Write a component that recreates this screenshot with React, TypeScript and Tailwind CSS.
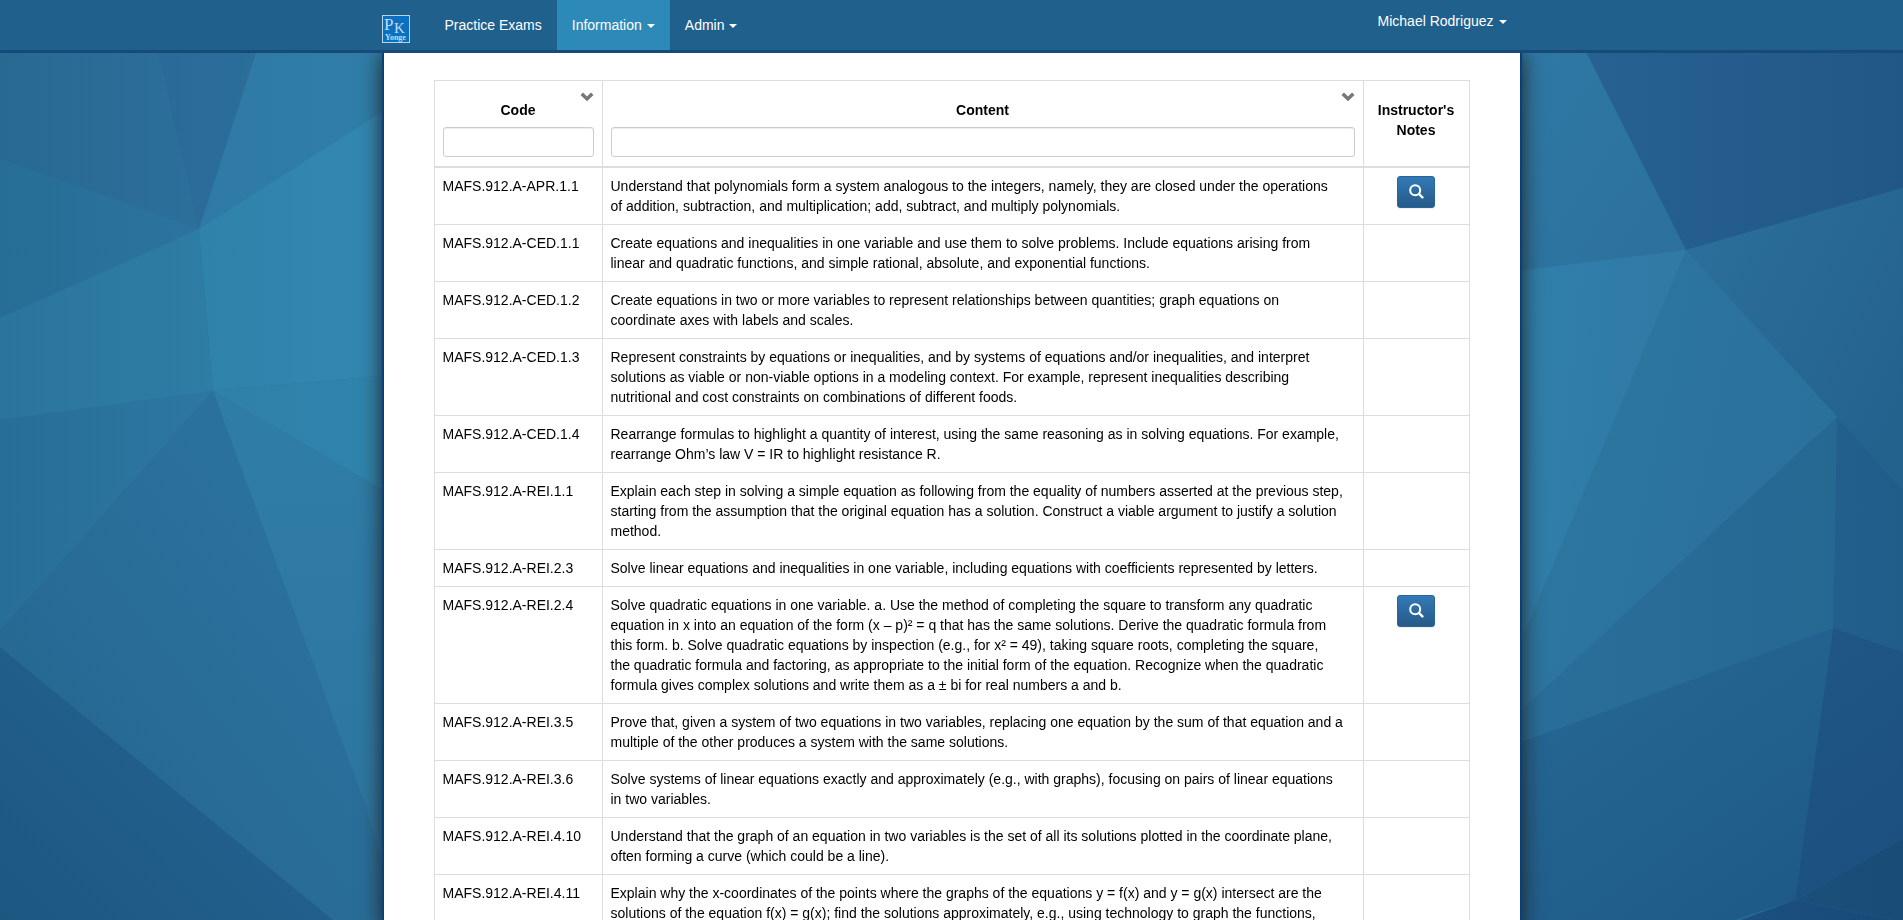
import React from 'react';

type Facet = { id: string; points: string; from: string; to: string; dir: [number, number, number, number] };

const facets: Facet[] = [
  { id: 'l1', points: '0,0 146,0 199,229 0,159', from: '#276991', to: '#2c6f9b', dir: [0, 0, 1, 0] },
  { id: 'l2', points: '146,0 273,0 199,229', from: '#2a6999', to: '#2b6f9a', dir: [0, 0, 1, 0] },
  { id: 'l3', points: '273,0 400,0 400,100 199,229', from: '#2f79a6', to: '#2f7fa9', dir: [0, 0, 1, 0] },
  { id: 'l4', points: '199,229 400,100 400,374 213,391', from: '#2f82a9', to: '#3388b3', dir: [0, 0, 1, 0] },
  { id: 'l5', points: '0,159 199,229 0,318', from: '#276e96', to: '#2c739f', dir: [0, 0, 1, 0] },
  { id: 'l6', points: '0,318 199,229 213,391 0,420', from: '#2a759e', to: '#2e7da5', dir: [0, 0, 1, 0] },
  { id: 'l7', points: '0,420 213,391 0,630', from: '#276f98', to: '#2d77a2', dir: [0, 0, 1, 0] },
  { id: 'l8', points: '213,391 400,374 400,500', from: '#3080a9', to: '#2f85ad', dir: [0, 0, 1, 0] },
  { id: 'l9', points: '213,391 400,500 400,920', from: '#2f7da7', to: '#2c75a0', dir: [0, 0, 0, 1] },
  { id: 'l10', points: '213,391 366,806 400,920 333,920 0,647 0,630', from: '#246790', to: '#2b719d', dir: [0, 0.8, 0.6, 0.2] },
  { id: 'l11', points: '0,647 333,920 0,920', from: '#1b577f', to: '#225f8c', dir: [0, 1, 0.6, 0.5] },
  { id: 'r1', points: '1500,0 1560,0 1686,250 1500,273', from: '#2f7aa7', to: '#2c709b', dir: [0, 0, 1, 1] },
  { id: 'r2', points: '1560,0 1903,0 1903,188 1686,250', from: '#266293', to: '#215786', dir: [0, 0, 1, 0] },
  { id: 'r3', points: '1686,250 1903,188 1903,490 1837,417', from: '#2b709b', to: '#24628e', dir: [0, 0, 1, 0.7] },
  { id: 'r4', points: '1500,273 1686,250 1522,660 1500,690', from: '#2f81ac', to: '#307aa6', dir: [0, 0, 0.8, 0.2] },
  { id: 'r5', points: '1686,250 1837,417 1500,730 1500,690', from: '#2d78a2', to: '#2a719c', dir: [0, 0, 1, 0.3] },
  { id: 'r6', points: '1837,417 1833,628 1500,750 1500,730', from: '#2a6f9b', to: '#256892', dir: [0, 0, 1, 0] },
  { id: 'r7', points: '1837,417 1903,490 1903,652 1833,628', from: '#235f8c', to: '#215d89', dir: [0, 0, 1, 0] },
  { id: 'r8', points: '1500,750 1833,628 1795,900 1735,920 1500,920', from: '#276995', to: '#1e5a88', dir: [0, 0, 0.8, 1] },
  { id: 'r9', points: '1833,628 1903,652 1903,838 1795,900', from: '#205786', to: '#1b5080', dir: [0, 0, 0.3, 1] },
  { id: 'r10', points: '1795,900 1903,838 1903,922', from: '#1a5079', to: '#194c77', dir: [0, 0, 1, 0] },
  { id: 'r11', points: '1795,900 1903,922 1735,922', from: '#1b5080', to: '#184975', dir: [0, 0, 1, 0] },
];

function Backdrop() {
  return (
    <svg
      aria-hidden="true"
      className="fixed inset-0 -z-10 h-full w-full bg-[#286c97]"
      viewBox="0 0 1903 920"
      preserveAspectRatio="none"
    >
      <defs>
        {facets.map((f) => (
          <linearGradient key={f.id} id={f.id} x1={f.dir[0]} y1={f.dir[1]} x2={f.dir[2]} y2={f.dir[3]}>
            <stop offset="0" stopColor={f.from} />
            <stop offset="1" stopColor={f.to} />
          </linearGradient>
        ))}
      </defs>
      {facets.map((f) => (
        <polygon key={f.id} points={f.points} fill={`url(#${f.id})`} />
      ))}
    </svg>
  );
}

function Logo() {
  return (
    <svg viewBox="0 0 28 28" className="size-7" role="img" aria-label="PK Yonge">
      <rect x="0.5" y="0.5" width="27" height="27" fill="#0b70bf" stroke="#b5d3e8" />
      <text fill="#c3dbec" fontFamily="Liberation Serif, serif">
        <tspan x="2" y="15" fontSize="17">P</tspan>
        <tspan x="12" y="18" fontSize="15">K</tspan>
        <tspan x="3" y="25" fontSize="8" fontWeight="bold">Yonge</tspan>
      </text>
    </svg>
  );
}

function Caret() {
  return <span className="ml-[5px] inline-block border-x-4 border-t-4 border-x-transparent border-t-white align-middle" />;
}

function ChevronDown() {
  return (
    <svg viewBox="0 0 14 10" className="h-2.5 w-3.5" aria-hidden="true">
      <path d="M0.5 3 3 0.5 7 4.5 11 0.5 13.5 3 7 9.3Z" fill="#777" />
    </svg>
  );
}

function SearchIcon() {
  return (
    <svg viewBox="0 0 15 15" className="mb-0.5 size-[15px]" aria-hidden="true" fill="none" stroke="#fff">
      <circle cx="6.2" cy="6.2" r="5" strokeWidth="2" />
      <path d="M10 10 13.4 13.4" strokeWidth="2.4" strokeLinecap="round" />
    </svg>
  );
}

type Standard = { code: string; content: string; notes?: boolean };

const standards: Standard[] = [
  { code: 'MAFS.912.A-APR.1.1', notes: true, content: 'Understand that polynomials form a system analogous to the integers, namely, they are closed under the operations\nof addition, subtraction, and multiplication; add, subtract, and multiply polynomials.' },
  { code: 'MAFS.912.A-CED.1.1', content: 'Create equations and inequalities in one variable and use them to solve problems. Include equations arising from\nlinear and quadratic functions, and simple rational, absolute, and exponential functions.' },
  { code: 'MAFS.912.A-CED.1.2', content: 'Create equations in two or more variables to represent relationships between quantities; graph equations on\ncoordinate axes with labels and scales.' },
  { code: 'MAFS.912.A-CED.1.3', content: 'Represent constraints by equations or inequalities, and by systems of equations and/or inequalities, and interpret\nsolutions as viable or non-viable options in a modeling context. For example, represent inequalities describing\nnutritional and cost constraints on combinations of different foods.' },
  { code: 'MAFS.912.A-CED.1.4', content: 'Rearrange formulas to highlight a quantity of interest, using the same reasoning as in solving equations. For example,\nrearrange Ohm’s law V = IR to highlight resistance R.' },
  { code: 'MAFS.912.A-REI.1.1', content: 'Explain each step in solving a simple equation as following from the equality of numbers asserted at the previous step,\nstarting from the assumption that the original equation has a solution. Construct a viable argument to justify a solution\nmethod.' },
  { code: 'MAFS.912.A-REI.2.3', content: 'Solve linear equations and inequalities in one variable, including equations with coefficients represented by letters.' },
  { code: 'MAFS.912.A-REI.2.4', notes: true, content: 'Solve quadratic equations in one variable. a. Use the method of completing the square to transform any quadratic\nequation in x into an equation of the form (x – p)² = q that has the same solutions. Derive the quadratic formula from\nthis form. b. Solve quadratic equations by inspection (e.g., for x² = 49), taking square roots, completing the square,\nthe quadratic formula and factoring, as appropriate to the initial form of the equation. Recognize when the quadratic\nformula gives complex solutions and write them as a ± bi for real numbers a and b.' },
  { code: 'MAFS.912.A-REI.3.5', content: 'Prove that, given a system of two equations in two variables, replacing one equation by the sum of that equation and a\nmultiple of the other produces a system with the same solutions.' },
  { code: 'MAFS.912.A-REI.3.6', content: 'Solve systems of linear equations exactly and approximately (e.g., with graphs), focusing on pairs of linear equations\nin two variables.' },
  { code: 'MAFS.912.A-REI.4.10', content: 'Understand that the graph of an equation in two variables is the set of all its solutions plotted in the coordinate plane,\noften forming a curve (which could be a line).' },
  { code: 'MAFS.912.A-REI.4.11', content: 'Explain why the x-coordinates of the points where the graphs of the equations y = f(x) and y = g(x) intersect are the\nsolutions of the equation f(x) = g(x); find the solutions approximately, e.g., using technology to graph the functions,' },
];

function Navbar() {
  return (
    <header className="sticky top-0 z-10 border-b-3 border-[#174a79] bg-[#1f608c] text-white">
      <nav className="mx-auto flex max-w-[1140px]" aria-label="Main">
        <a href="#home" className="mr-5 pt-[15px]">
          <Logo />
        </a>
        <a href="#exams" className="p-[15px]">Practice Exams</a>
        <button type="button" className="bg-[#2d89b8] p-[15px]">
          Information
          <Caret />
        </button>
        <button type="button" className="p-[15px]">
          Admin
          <Caret />
        </button>
        <button type="button" className="ml-auto self-start px-[15px] py-[11px]">
          Michael Rodriguez
          <Caret />
        </button>
      </nav>
    </header>
  );
}

function FilterHeader({ label }: { label: string }) {
  const id = `filter-${label.toLowerCase()}`;
  return (
    <th scope="col" className="border border-b-2 border-[#ddd] px-2 pt-[11px] pb-[9px] align-top">
      <button type="button" aria-label={`${label} column menu`} className="ml-auto block">
        <ChevronDown />
      </button>
      <label htmlFor={id} className="block leading-4">{label}</label>
      <input
        id={id}
        type="text"
        className="mt-[9px] block h-[30px] w-full rounded-[3px] border border-[#ccc] px-2.5 font-normal shadow-[inset_0_1px_1px_rgba(0,0,0,0.075)]"
      />
    </th>
  );
}

export default function App() {
  return (
    <div className="isolate flex min-h-screen flex-col font-['Liberation_Sans',Arial,sans-serif] text-[14px] leading-5 text-black">
      <Backdrop />
      <Navbar />
      <main className="mx-auto w-full max-w-[1140px] grow border-x-2 border-[#05417c] bg-white px-[50px] pt-[27px] shadow-[0_0_20px_#222]">
        <table className="w-full table-fixed border-collapse border border-[#ddd]">
          <colgroup>
            <col className="w-[168px]" />
            <col />
            <col className="w-[106px]" />
          </colgroup>
          <thead>
            <tr>
              <FilterHeader label="Code" />
              <FilterHeader label="Content" />
              <th scope="col" className="border border-b-2 border-[#ddd] px-2 pt-[19px] align-top">Instructor's Notes</th>
            </tr>
          </thead>
          <tbody>
            {standards.map((s) => (
              <tr key={s.code}>
                <td className="border border-[#ddd] p-2 align-top">{s.code}</td>
                <td className="border border-[#ddd] p-2 align-top whitespace-pre-line">{s.content}</td>
                <td className="border border-[#ddd] p-2 align-top">
                  {s.notes && (
                    <button
                      type="button"
                      aria-label={`Notes for ${s.code}`}
                      className="mx-auto flex h-8 w-[38px] items-center justify-center rounded-[3px] border border-[#2b669a] bg-linear-to-b from-[#337ab7] to-[#265a88] shadow-[0_1px_1px_rgba(0,0,0,0.075)]"
                    >
                      <SearchIcon />
                    </button>
                  )}
                </td>
              </tr>
            ))}
          </tbody>
        </table>
      </main>
    </div>
  );
}
